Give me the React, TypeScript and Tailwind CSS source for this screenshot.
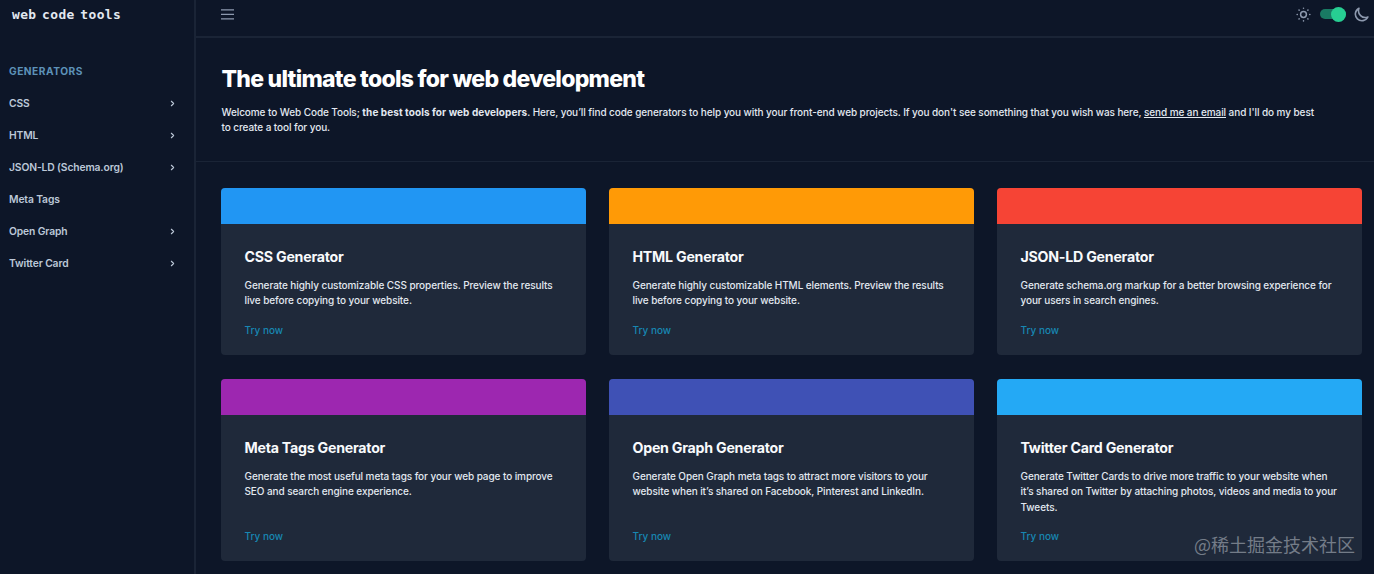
import { ChevronRight } from 'lucide-react'

interface NavItem {
  label: string
  expandable: boolean
}

interface Generator {
  title: string
  lines: string[]
  bar: string
}

const navItems: NavItem[] = [
  { label: 'CSS', expandable: true },
  { label: 'HTML', expandable: true },
  { label: 'JSON-LD (Schema.org)', expandable: true },
  { label: 'Meta Tags', expandable: false },
  { label: 'Open Graph', expandable: true },
  { label: 'Twitter Card', expandable: true },
]

const generators: Generator[] = [
  {
    title: 'CSS Generator',
    lines: ['Generate highly customizable CSS properties. Preview the results', 'live before copying to your website.'],
    bar: 'bg-[#2196f3]',
  },
  {
    title: 'HTML Generator',
    lines: ['Generate highly customizable HTML elements. Preview the results', 'live before copying to your website.'],
    bar: 'bg-[#ff9a06]',
  },
  {
    title: 'JSON-LD Generator',
    lines: ['Generate schema.org markup for a better browsing experience for', 'your users in search engines.'],
    bar: 'bg-[#f64435]',
  },
  {
    title: 'Meta Tags Generator',
    lines: ['Generate the most useful meta tags for your web page to improve', 'SEO and search engine experience.'],
    bar: 'bg-[#9d27b0]',
  },
  {
    title: 'Open Graph Generator',
    lines: ['Generate Open Graph meta tags to attract more visitors to your', 'website when it’s shared on Facebook, Pinterest and LinkedIn.'],
    bar: 'bg-[#3f51b5]',
  },
  {
    title: 'Twitter Card Generator',
    lines: [
      'Generate Twitter Cards to drive more traffic to your website when',
      'it’s shared on Twitter by attaching photos, videos and media to your',
      'Tweets.',
    ],
    bar: 'bg-[#24a9f5]',
  },
]

function MenuIcon() {
  return (
    <svg className="h-[11px] w-[13px]" viewBox="0 0 13 11" fill="none" stroke="currentColor" strokeWidth="1.3">
      <path d="M0 .9h13M0 5.4h13M0 9.9h13" />
    </svg>
  )
}

function SunIcon() {
  return (
    <svg className="size-[15px]" viewBox="0 0 16 16" fill="none" stroke="currentColor" strokeLinecap="round">
      <circle cx="8" cy="8" r="3.1" strokeWidth="1.6" />
      <path
        strokeWidth="1.6"
        d="M8 1.2v.2M8 14.6v.2M1.2 8h.2M14.6 8h.2M3.2 3.2l.15.15M12.65 12.65l.15.15M3.2 12.8l.15-.15M12.65 3.35l.15-.15"
      />
    </svg>
  )
}

function MoonIcon() {
  return (
    <svg className="size-[15px]" viewBox="0 0 16 16" fill="none" stroke="currentColor" strokeLinejoin="round">
      <path strokeWidth="1.7" d="M5.3 1.4A7 7 0 1 0 14.8 10.6 7.2 7.2 0 0 1 5.3 1.4Z" />
    </svg>
  )
}

function Sidebar() {
  return (
    <aside className="w-[196px] shrink-0 border-r-2 border-[#1a2436]">
      <div className="h-[29px] pl-3 font-['DejaVu_Sans_Mono',monospace] text-[12.9px] leading-[29px] font-bold tracking-[0.38px] whitespace-nowrap text-slate-200 [word-spacing:-2.45px]">
        web code tools
      </div>
      <h3 className="mt-[34px] pl-[9px] text-[10.2px] leading-4 font-bold tracking-[0.5px] text-[#5d92b8]">GENERATORS</h3>
      <nav className="mt-2">
        {navItems.map((item) => (
          <a key={item.label} className="flex h-8 items-center justify-between pr-[17.5px] pl-[9px] text-[10.3px] font-semibold tracking-[-0.12px] text-[#bcc8d8]">
            <span className="pt-px">{item.label}</span>
            {item.expandable && <ChevronRight className="size-[9px]" strokeWidth={3} />}
          </a>
        ))}
      </nav>
    </aside>
  )
}

function Header() {
  return (
    <header className="flex h-[38px] items-center justify-between border-b-2 border-[#1a2436] pr-[5px] pb-2 pl-[25px] text-[#8d99ae]">
      <MenuIcon />
      <div className="flex items-center">
        <SunIcon />
        <div className="ml-[9px] flex h-[10px] w-[26px] items-center justify-end rounded-full bg-[#197a63]">
          <span className="size-[15px] shrink-0 rounded-full bg-[#27ce92]" />
        </div>
        <div className="ml-2">
          <MoonIcon />
        </div>
      </div>
    </header>
  )
}

function GeneratorCard({ title, lines, bar }: Generator) {
  return (
    <article className="flex flex-col overflow-hidden rounded-[4px] bg-[#1f293a]">
      <div className={`h-[36.4px] shrink-0 ${bar}`} />
      <div className="flex flex-1 flex-col px-[23.5px] pt-[22.8px] pb-[17px]">
        <h2 className="text-[14.2px] leading-5 font-bold tracking-[-0.24px] text-slate-50">{title}</h2>
        <p className="mt-[10.8px] text-[10px] leading-[15.3px] font-medium tracking-[-0.085px] whitespace-nowrap text-slate-200">
          {lines.map((line) => (
            <span key={line} className="block">{line}</span>
          ))}
        </p>
        <a className="mt-auto text-[10px] leading-4 font-medium text-[#1787b2]">Try now</a>
      </div>
    </article>
  )
}

export default function App() {
  return (
    <div className="relative flex h-[574px] w-[1374px] overflow-hidden bg-[#0d1628] font-['Inter',sans-serif]">
      <Sidebar />
      <main className="min-w-0 flex-1">
        <Header />
        <section className="h-[124px] border-b border-[#1a2436] pt-[25px] pl-[25.5px]">
          <h1 className="text-[23px] leading-8 font-extrabold tracking-[-0.73px] text-white">The ultimate tools for web development</h1>
          <p className="mt-[10px] text-[10px] leading-[15.3px] font-medium tracking-[-0.083px] whitespace-nowrap text-slate-200">
            Welcome to Web Code Tools; <strong className="font-bold tracking-[0.07px]">the best tools for web developers</strong>. Here, you’ll find code generators to
            help you with your front-end web projects. If you don't see something that you wish was here,{' '}
            <a className="underline">send me an email</a> and I'll do my best
            <br />
            to create a tool for you.
          </p>
        </section>
        <div className="grid grid-cols-3 grid-rows-[167px_182px] gap-x-[23px] gap-y-6 pt-[26px] pr-3 pl-[25px]">
          {generators.map((generator) => (
            <GeneratorCard key={generator.title} {...generator} />
          ))}
        </div>
      </main>
      <div className="absolute right-[19px] bottom-[17.5px] font-['Noto_Sans_CJK_SC',sans-serif] text-[18px] leading-[26px] text-[#747c88]">
        @稀土掘金技术社区
      </div>
    </div>
  )
}
